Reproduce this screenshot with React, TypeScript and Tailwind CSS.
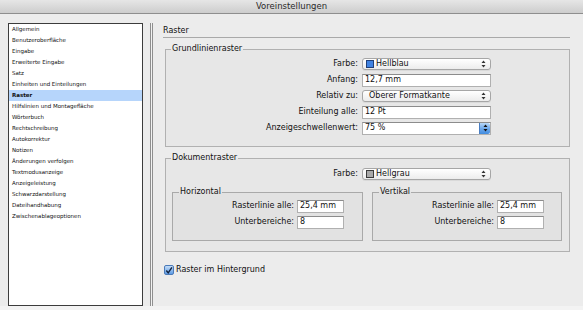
import React from "react";

const items = [
  "Allgemein",
  "Benutzeroberfläche",
  "Eingabe",
  "Erweiterte Eingabe",
  "Satz",
  "Einheiten und Einteilungen",
  "Raster",
  "Hilfslinien und Montagefläche",
  "Wörterbuch",
  "Rechtschreibung",
  "Autokorrektur",
  "Notizen",
  "Änderungen verfolgen",
  "Textmodusanzeige",
  "Anzeigeleistung",
  "Schwarzdarstellung",
  "Dateihandhabung",
  "Zwischenablageoptionen",
];

const Arrows = ({ color = "#333" }: { color?: string }) => (
  <svg width="5" height="8" viewBox="0 0 5 8">
    <path d="M2.5 0.5 L4.5 3 L0.5 3 Z M2.5 7.5 L4.5 5 L0.5 5 Z" fill={color} />
  </svg>
);

const Select = ({ value, swatch }: { value: string; swatch?: string }) => (
  <div
    className={`flex h-[12px] w-[129px] items-center rounded-[3px] border border-[#a6a6a6] bg-linear-to-b from-white to-[#ececec] pr-[4px] shadow-[0_1px_0_rgba(0,0,0,0.06)] ${
      swatch ? "pl-[3px]" : "pl-[6px]"
    }`}
  >
    {swatch && <span className={`mr-[2px] h-[8px] w-[8px] border ${swatch}`} />}
    <span className="flex-1 leading-none">{value}</span>
    <Arrows />
  </div>
);

const TextField = ({ value, w = "w-[129px]" }: { value: string; w?: string }) => (
  <div
    className={`flex h-[13px] ${w} items-center border border-[#b0b0b0] border-t-[#8c8c8c] bg-white pl-[2px] leading-none`}
  >
    {value}
  </div>
);

const Combo = ({ value }: { value: string }) => (
  <div className="flex h-[13px] w-[129px] items-stretch border border-[#b0b0b0] border-t-[#8c8c8c] bg-white">
    <span className="flex flex-1 items-center pl-[2px] leading-none">{value}</span>
    <span className="flex w-[11px] items-center justify-center rounded-r-[2px] border-l border-[#4a7ec2] bg-linear-to-b from-[#b9d8f7] via-[#6fa9ea] to-[#3f8be0]">
      <Arrows color="#111" />
    </span>
  </div>
);

const Row = ({ label, children }: { label: string; children: React.ReactNode }) => (
  <div className="flex h-[16px] items-center">
    <span className="w-[192px] text-right">{label}</span>
    <div className="ml-[4px]">{children}</div>
  </div>
);

const SubRow = ({ label, value }: { label: string; value: string }) => (
  <div className="flex h-[16px] items-center">
    <span className="w-[121px] text-right">{label}</span>
    <div className="ml-[3px]">
      <TextField value={value} w="w-[47px]" />
    </div>
  </div>
);

export default function App() {
  return (
    <div className="flex h-[310px] w-[583px] flex-col overflow-hidden bg-[#ececec] font-['DejaVu_Sans',sans-serif] text-[8px] text-[#111]">
      {/* title bar */}
      <div className="flex h-[14px] shrink-0 items-center justify-center border-b border-[#8e8e8e] bg-linear-to-b from-[#e6e6e6] to-[#cdcdcd] text-[8.5px] text-[#2a2a2a]">
        Voreinstellungen
      </div>

      <div className="flex h-[292px]">
        {/* category list */}
        <div className="ml-[8px] mt-[9px] h-[283px] w-[135px] border border-[#3c3c3c] bg-white text-[5.5px]">
          {items.map((it) => (
            <div
              key={it}
              className={`h-[11px] truncate pl-[3px] leading-[11px] ${
                it === "Raster" ? "bg-[#b6d5fb] font-bold" : ""
              }`}
            >
              {it}
            </div>
          ))}
        </div>

        {/* splitter */}
        <div className="ml-[7px] mt-[9px] h-[283px] w-[3px] border-x border-[#8f8f8f] bg-[#f2f2f2]" />

        {/* settings */}
        <div className="flex flex-col pl-[10px]">
          <div className="mt-[11px] h-[13px] w-[407px] border-b border-[#a9a9a9] leading-[12px]">Raster</div>

          <fieldset className="ml-[2px] mt-[5px] w-[405px] border border-[#b1b1b1] bg-[#e7e7e7] pb-[10px]">
            <legend className="ml-[5px] px-[1px] leading-[12px]">Grundlinienraster</legend>
            <div className="pt-[1px]">
              <Row label="Farbe:">
                <Select value="Hellblau" swatch="bg-[#3f82e2] border-[#1f3f78]" />
              </Row>
              <Row label="Anfang:">
                <TextField value="12,7 mm" />
              </Row>
              <Row label="Relativ zu:">
                <Select value="Oberer Formatkante" />
              </Row>
              <Row label="Einteilung alle:">
                <TextField value="12 Pt" />
              </Row>
              <Row label="Anzeigeschwellenwert:">
                <Combo value="75 %" />
              </Row>
            </div>
          </fieldset>

          <fieldset className="ml-[2px] mt-[5px] w-[405px] border border-[#b1b1b1] bg-[#e7e7e7] pb-[10px]">
            <legend className="ml-[5px] px-[1px] leading-[12px]">Dokumentraster</legend>
            <div className="pt-[2px]">
              <Row label="Farbe:">
                <Select value="Hellgrau" swatch="bg-[#a9a9a9] border-[#3a3a3a]" />
              </Row>
            </div>
            <div className="mt-[4px] flex gap-[9px] pl-[6px]">
              <fieldset className="w-[191px] border border-[#a9a9a9] bg-[#e2e2e2] pb-[10px]">
                <legend className="ml-[6px] px-[1px] leading-[12px]">Horizontal</legend>
                <SubRow label="Rasterlinie alle:" value="25,4 mm" />
                <SubRow label="Unterbereiche:" value="8" />
              </fieldset>
              <fieldset className="w-[190px] border border-[#a9a9a9] bg-[#e2e2e2] pb-[10px]">
                <legend className="ml-[6px] px-[1px] leading-[12px]">Vertikal</legend>
                <SubRow label="Rasterlinie alle:" value="25,4 mm" />
                <SubRow label="Unterbereiche:" value="8" />
              </fieldset>
            </div>
          </fieldset>

          <label className="ml-[1px] mt-[13px] flex h-[10px] items-center gap-[2px]">
            <span className="flex h-[10px] w-[10px] items-center justify-center rounded-[2px] border border-[#4b7ab8] bg-linear-to-b from-[#c3dcf7] to-[#5c9be4]">
              <svg width="9" height="9" viewBox="0 0 9 9">
                <path d="M1.5 4.5 L3.6 7.2 L7.8 1" stroke="#14233f" strokeWidth="1.6" fill="none" />
              </svg>
            </span>
            <span className="leading-none">Raster im Hintergrund</span>
          </label>
        </div>
      </div>
      <div className="h-[4px] bg-[#f3f3f3]" />
    </div>
  );
}
